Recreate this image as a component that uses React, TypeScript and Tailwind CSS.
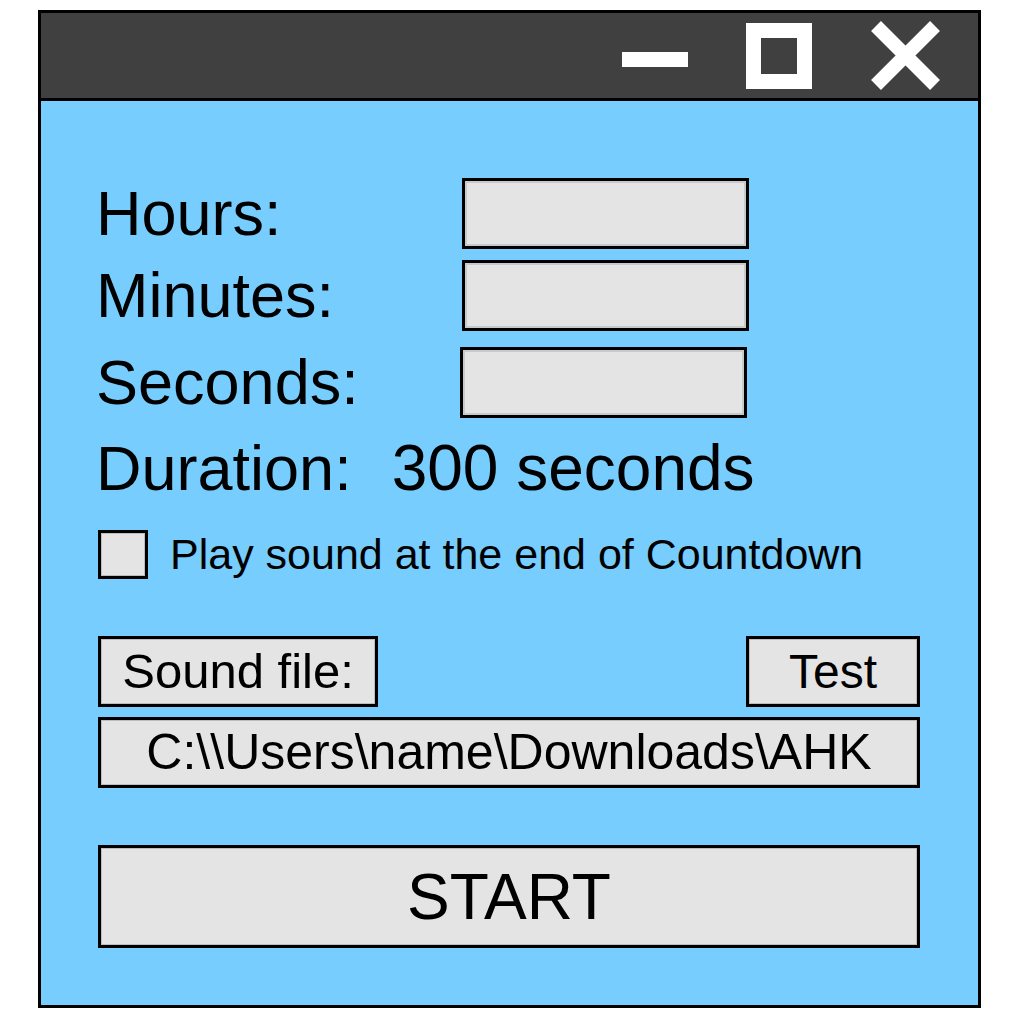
import React from 'react';

const font = { fontFamily: '"Liberation Sans", Arial, sans-serif' };

function Field() {
  return (
    <div className="h-[71px] w-[287px] border-[3px] border-black bg-[#e4e4e4] shadow-[inset_0_0_0_2px_#c9c9c9]" />
  );
}

function Box({ className, children }: { className: string; children: React.ReactNode }) {
  return (
    <div
      className={
        'flex items-center justify-center border-[3px] border-black bg-[#e4e4e4] shadow-[inset_0_0_0_1px_#bdbdbd] text-black ' +
        className
      }
    >
      {children}
    </div>
  );
}

export default function App() {
  return (
    <main className="w-[1020px] h-[1020px] bg-white pt-[10px] pl-[38px]" style={font}>
      <div className="flex h-[998px] w-[943px] flex-col border-[3px] border-black bg-[#76cdfe]">
        {/* title bar */}
        <div className="flex h-[88px] items-center justify-end border-b-[3px] border-black bg-[#404040]">
          <div className="mt-[7px] mr-[58px] h-[15px] w-[66px] bg-white" />
          <div className="mr-[59px] h-[66px] w-[66px] border-[15px] border-white" />
          <svg className="mr-[38px]" width="69" height="69" viewBox="0 0 69 69">
            <path d="M5 5 L64 64 M64 5 L5 64" stroke="white" strokeWidth="14" strokeLinecap="butt" />
          </svg>
        </div>

        {/* body */}
        <div className="flex flex-col pl-[57px] pr-[58px] pt-[77px]">
          <div className="grid grid-cols-[364px_287px] items-center gap-y-[11px] text-[63px] leading-none text-black">
            <span className="-ml-[2px]">Hours:</span>
            <Field />
            <span className="-ml-[2px]">Minutes:</span>
            <Field />
            <span className="-ml-[2px] mt-[5px]">Seconds:</span>
            <div className="mt-[5px] -ml-[2px]">
              <Field />
            </div>
          </div>

          <div className="-ml-[2px] mt-[14px] flex h-[72px] items-center gap-[40px] text-black">
            <span className="text-[63px]">Duration:</span>
            <span className="text-[64px]">300 seconds</span>
          </div>

          <div className="mt-[26px] flex items-center gap-[22px]">
            <div className="h-[49px] w-[50px] border-[3px] border-black bg-[#e4e4e4] shadow-[inset_0_0_0_1px_#bdbdbd]" />
            <span className="text-[43px] leading-none text-black">Play sound at the end of Countdown</span>
          </div>

          <div className="mt-[57px] flex items-center justify-between">
            <Box className="h-[71px] w-[280px] text-[49px]">Sound file:</Box>
            <Box className="h-[71px] w-[174px] text-[48px]">Test</Box>
          </div>

          <Box className="mt-[10px] h-[71px] w-full text-[50px]">C:\\Users\name\Downloads\AHK</Box>

          <Box className="mt-[57px] h-[103px] w-full text-[64px]">START</Box>
        </div>
      </div>
    </main>
  );
}
